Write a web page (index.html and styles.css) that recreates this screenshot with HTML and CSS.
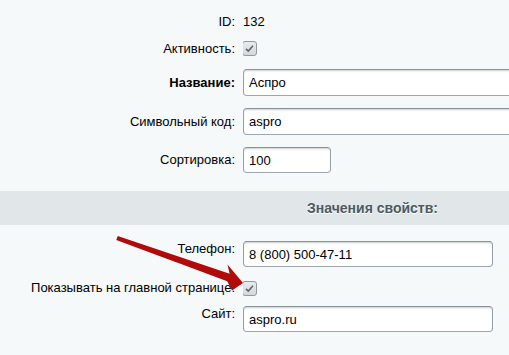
FILE: index.html
```html
<!DOCTYPE html>
<html lang="ru">
<head>
    <meta charset="UTF-8">
    <title>Элемент</title>
    <link rel="stylesheet" href="styles.css">
</head>
<body>
    <div class="page">
        <div class="form">
            <div class="row row-id">
                <div class="label">ID:</div>
                <div class="value">132</div>
            </div>
            <div class="row row-check">
                <div class="label">Активность:</div>
                <div class="value"><span class="check"><svg width="13" height="13" viewBox="0 0 13 13"><path d="M3 6.8 L5.3 9 L10 3.8" fill="none" stroke="#5f676c" stroke-width="1.6"/></svg></span></div>
            </div>
            <div class="row">
                <div class="label bold">Название:</div>
                <div class="value"><input class="field wide" type="text" value="Аспро"></div>
            </div>
            <div class="row">
                <div class="label">Символьный код:</div>
                <div class="value"><input class="field wide" type="text" value="aspro"></div>
            </div>
            <div class="row">
                <div class="label">Сортировка:</div>
                <div class="value"><input class="field short" type="text" value="100"></div>
            </div>
        </div>

        <div class="heading">Значения свойств:</div>

        <div class="form props">
            <div class="row top">
                <div class="label">Телефон:</div>
                <div class="value"><input class="field mid" type="text" value="8 (800) 500-47-11"></div>
            </div>
            <div class="row row-check">
                <div class="label">Показывать на главной странице:</div>
                <div class="value"><span class="check"><svg width="13" height="13" viewBox="0 0 13 13"><path d="M3 6.8 L5.3 9 L10 3.8" fill="none" stroke="#5f676c" stroke-width="1.6"/></svg></span></div>
            </div>
            <div class="row top">
                <div class="label">Сайт:</div>
                <div class="value"><input class="field mid" type="text" value="aspro.ru"></div>
            </div>
        </div>

        <!-- стрелка поверх формы -->
        <svg class="arrow" width="509" height="355" viewBox="0 0 509 355">
            <polygon points="117.7,235.9 229.6,273.8 227.5,264.5 243,283 232,290.5 227.2,281.2 116.3,240.1" fill="#b00a0a"/>
        </svg>
    </div>
</body>
</html>
```

FILE: styles.css
```css
html, body {
    margin: 0;
    padding: 0;
    overflow: hidden;
}
body {
    background-color: #f5f9f9;
    font-family: "Liberation Sans", Arial, sans-serif;
    font-size: 13px;
    color: #000;
}
.page {
    position: relative;
    height: 355px;
    overflow: hidden;
}
.form {
    padding-top: 13px;
}
.props {
    padding-top: 16px;
}
.row {
    display: grid;
    grid-template-columns: 235px minmax(0, 1fr);
    column-gap: 8px;
    align-items: center;
    margin-bottom: 12px;
}
.row:last-child {
    margin-bottom: 0;
}
.row.top {
    align-items: start;
}
.row-id {
    height: 18px;
    margin-bottom: 9px;
}
.row-check {
    height: 17px;
}
.props .row-check {
    height: 18px;
    margin-bottom: 9px;
}
.label {
    text-align: right;
    line-height: 16px;
    white-space: nowrap;
}
.label.bold {
    font-weight: bold;
}
.value {
    line-height: 16px;
    overflow: hidden;
}
.check {
    display: block;
    box-sizing: border-box;
    width: 15px;
    height: 15px;
    margin-left: -1px;
    border: 1px solid #9098a0;
    border-radius: 3px;
    background: linear-gradient(#e8ebec, #d3d8db);
}
.check svg {
    display: block;
}
.field {
    display: block;
    box-sizing: border-box;
    height: 27px;
    margin: 0;
    padding: 0 5px;
    border: 1px solid;
    border-color: #87919c #959ea9 #9ea7b1 #959ea9;
    border-radius: 4px;
    background: #fff;
    box-shadow: inset 0 2px 2px -1px rgba(180, 188, 191, 0.7);
    font-family: "Liberation Sans", Arial, sans-serif;
    font-size: 13px;
    color: #000;
    outline: none;
}
.field.wide {
    width: calc(100% + 10px);
}
.field.short {
    width: 88px;
    height: 26px;
}
.field.mid {
    width: 250px;
    height: 26px;
}
.heading {
    margin-top: 18px;
    height: 34px;
    padding-right: 71px;
    line-height: 34px;
    background-color: #e1e7e8;
    text-align: right;
    font-size: 14px;
    font-weight: bold;
    color: #4b5a61;
    text-shadow: 0 1px #fff;
}
.arrow {
    position: absolute;
    left: 0;
    top: 0;
    pointer-events: none;
}
```
